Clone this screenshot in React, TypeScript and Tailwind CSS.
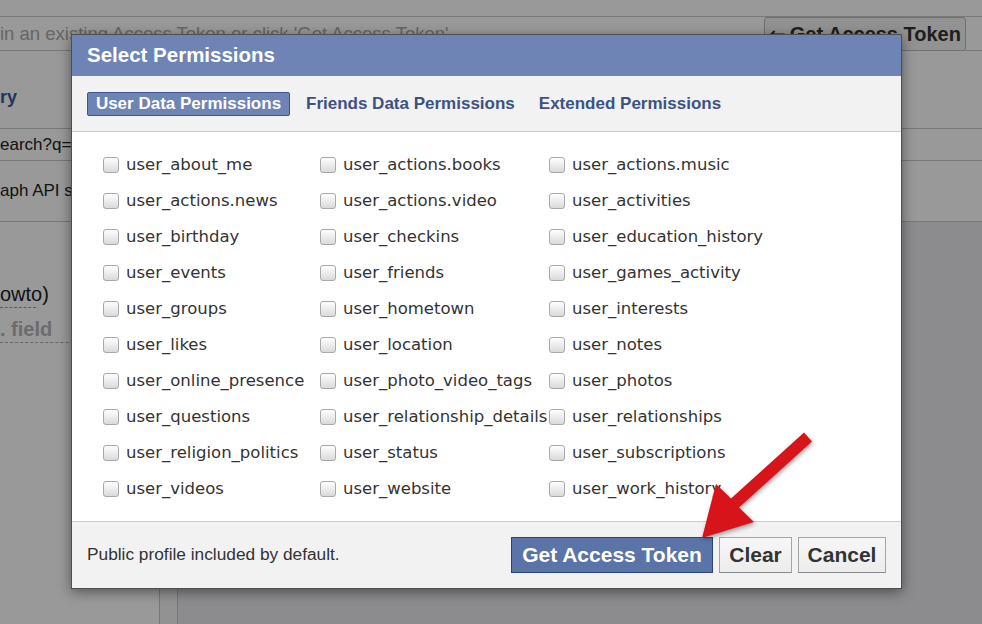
import React from "react";

const rows: string[][] = [
  ["user_about_me", "user_actions.books", "user_actions.music"],
  ["user_actions.news", "user_actions.video", "user_activities"],
  ["user_birthday", "user_checkins", "user_education_history"],
  ["user_events", "user_friends", "user_games_activity"],
  ["user_groups", "user_hometown", "user_interests"],
  ["user_likes", "user_location", "user_notes"],
  ["user_online_presence", "user_photo_video_tags", "user_photos"],
  ["user_questions", "user_relationship_details", "user_relationships"],
  ["user_religion_politics", "user_status", "user_subscriptions"],
  ["user_videos", "user_website", "user_work_history"],
];

function Checkbox({ label }: { label: string }) {
  return (
    <label className="flex h-9 items-center gap-[7px] whitespace-nowrap">
      <span className="h-4 w-4 shrink-0 rounded-[3px] border border-[#a9a9a9] bg-gradient-to-b from-white to-[#dadada] shadow-[inset_0_1px_0_rgba(255,255,255,0.9)]" />
      <span className="font-['DejaVu_Sans',sans-serif] text-[16.5px] text-[#333]">{label}</span>
    </label>
  );
}

function BackgroundPage() {
  return (
    <div className="flex h-full flex-col bg-white font-['Liberation_Sans',sans-serif]">
      {/* top bar */}
      <div className="h-[17px] shrink-0 border-b border-[#c8c8c8]" />
      {/* access token input row */}
      <div className="flex h-[34px] shrink-0 items-center border-b border-[#c8c8c8]">
        <div className="flex-1 whitespace-nowrap text-[18.5px] text-[#aaa]">
          in an existing Access Token or click 'Get Access Token'
        </div>
        <div className="mr-[16px] flex h-[34px] w-[202px] items-center justify-center gap-1 rounded-[3px] border border-[#bbb] bg-[#f4f4f4] text-[20px] font-bold text-[#333]">
          <span className="font-['DejaVu_Sans',sans-serif]">&#8592;</span> Get Access Token
        </div>
      </div>
      <div className="flex h-[78px] shrink-0 items-end border-b border-[#c8c8c8] pb-[17px]">
        <span className="text-[18px] font-bold text-[#3b5998]">ry</span>
      </div>
      <div className="flex h-[32px] shrink-0 items-center border-b border-[#c8c8c8]">
        <span className="text-[17px] text-[#222]">earch?q=</span>
      </div>
      <div className="flex h-[61px] shrink-0 items-center border-b border-[#c8c8c8]">
        <span className="text-[17px] text-[#222]">aph API s</span>
      </div>
      <div className="flex flex-1">
        <div className="w-[160px] border-r border-[#c8c8c8] bg-white pt-[59px]">
          <div className="w-[36px] border-b border-dashed border-[#999] text-[20px] leading-[26px] text-[#222]">
            owto)
          </div>
          <div className="mt-[8px] border-b border-dashed border-[#aaa] text-[20px] font-bold leading-[26px] text-[#b5b5b5]">
            . field
          </div>
        </div>
        <div className="w-[18px] border-r border-[#c8c8c8] bg-[#f4f4f4]" />
        <div className="flex-1 bg-[#e9eaed]" />
      </div>
    </div>
  );
}

function Arrow() {
  return (
    <svg
      className="absolute left-[690px] top-[425px] drop-shadow-[1px_2px_2px_rgba(0,0,0,0.35)]"
      width="130"
      height="125"
      viewBox="0 0 130 125"
    >
      <polygon
        points="12,113 26,59 41,73.5 114,7.5 122,16.5 49,82.5 64,97"
        fill="#d8141b"
      />
    </svg>
  );
}

export default function App() {
  return (
    <div className="relative h-[624px] w-[982px] overflow-hidden">
      <BackgroundPage />
      <div className="absolute inset-0 bg-black/40" />

      {/* dialog */}
      <div className="absolute left-[71px] top-[34px] flex h-[555px] w-[831px] flex-col border border-[#4f4f4f] bg-white font-['Liberation_Sans',sans-serif] shadow-[0_3px_12px_rgba(0,0,0,0.45)]">
        <div className="flex h-[41px] shrink-0 items-center bg-[#6d84b4] px-[15px]">
          <h2 className="text-[20.5px] font-bold text-white">Select Permissions</h2>
        </div>

        <div className="flex h-[56px] shrink-0 items-center gap-[16px] border-b border-[#cccccc] bg-[#f2f2f2] px-[15px]">
          <div className="flex h-[24px] w-[203px] items-center justify-center rounded-[2px] border border-[#3b5493] bg-[#6d84b4] text-[17px] font-bold text-white">
            User Data Permissions
          </div>
          <div className="text-[17px] font-bold text-[#3d5283]">Friends Data Permissions</div>
          <div className="ml-[8px] text-[17px] font-bold text-[#3d5283]">Extended Permissions</div>
        </div>

        <div className="flex-1 pl-[31px] pt-[15px]">
          {rows.map((r) => (
            <div key={r[0]} className="grid grid-cols-[217px_229px_1fr]">
              {r.map((p) => (
                <Checkbox key={p} label={p} />
              ))}
            </div>
          ))}
        </div>

        <div className="flex h-[67px] shrink-0 items-center justify-between border-t border-[#cccccc] bg-[#f2f2f2] px-[15px]">
          <p className="text-[17.3px] text-[#333]">Public profile included by default.</p>
          <div className="flex gap-[6px]">
            <button className="h-[36px] w-[202px] border border-[#29447e] bg-[#5b74a8] text-[21px] font-bold text-white">
              Get Access Token
            </button>
            <button className="h-[36px] w-[73px] border border-[#a5a5a5] border-b-[#8a8a8a] bg-gradient-to-b from-[#f7f7f7] to-[#ececec] text-[21px] font-bold text-[#333]">
              Clear
            </button>
            <button className="h-[36px] w-[88px] border border-[#a5a5a5] border-b-[#8a8a8a] bg-gradient-to-b from-[#f7f7f7] to-[#ececec] text-[21px] font-bold text-[#333]">
              Cancel
            </button>
          </div>
        </div>
      </div>

      <Arrow />
    </div>
  );
}
